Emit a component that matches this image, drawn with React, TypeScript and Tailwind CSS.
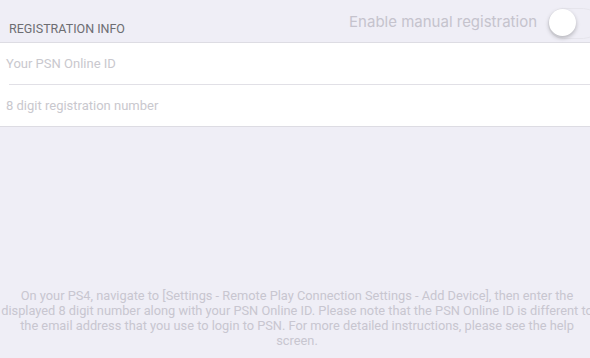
import React from 'react';

const NOTE_LINES = [
  'On your PS4, navigate to [Settings - Remote Play Connection Settings - Add Device], then enter the',
  'displayed 8 digit number along with your PSN Online ID. Please note that the PSN Online ID is different to',
  'the email address that you use to login to PSN. For more detailed instructions, please see the help',
  'screen.',
];

export default function App() {
  return (
    <div
      className="h-[358px] w-[590px] overflow-hidden bg-[#efeef6] flex flex-col"
      style={{ fontFamily: 'Roboto, "Noto Sans", sans-serif' }}
    >
      {/* Header */}
      <div className="h-[42px] flex justify-between">
        <div className="self-end pb-[5px] pl-[9px] text-[12.5px] leading-[16px] text-[#6d6d72]">
          REGISTRATION INFO
        </div>
        <div className="flex items-start pt-[8px]">
          <span className="text-[15px] leading-[28px] text-[#c5c3cd] mr-[11px]" style={{ fontFamily: 'Inter, Roboto, sans-serif' }}>
            Enable manual registration
          </span>
          <div className="relative w-[51px] h-[31px] -mr-[9px] rounded-full border-[1.5px] border-[#e6e5ec] bg-[#efeef6]">
            <div className="absolute left-0 top-0 w-[27px] h-[27px] rounded-full bg-white shadow-[0_2px_4px_rgba(0,0,0,0.25)]" />
          </div>
        </div>
      </div>

      {/* Form panel */}
      <div className="bg-white border-t border-b border-[#dddce3]">
        <div className="h-[41px] flex items-center pl-[6px] text-[13px] text-[#c9c8ce]">
          Your PSN Online ID
        </div>
        <div className="ml-[9px] h-px bg-[#e1e0e6]" />
        <div className="h-[41px] flex items-center pl-[6px] text-[13px] text-[#c9c8ce]">
          8 digit registration number
        </div>
      </div>

      <div className="flex-1" />

      {/* Footer note */}
      <div className="pb-[10px] flex justify-center">
        <div className="w-[600px] shrink-0 ml-[4px] flex flex-col items-center text-[12.8px] leading-[15px] text-[#c8c6d0]">
          {NOTE_LINES.map((line) => (
            <span key={line} className="whitespace-nowrap">{line}</span>
          ))}
        </div>
      </div>
    </div>
  );
}
